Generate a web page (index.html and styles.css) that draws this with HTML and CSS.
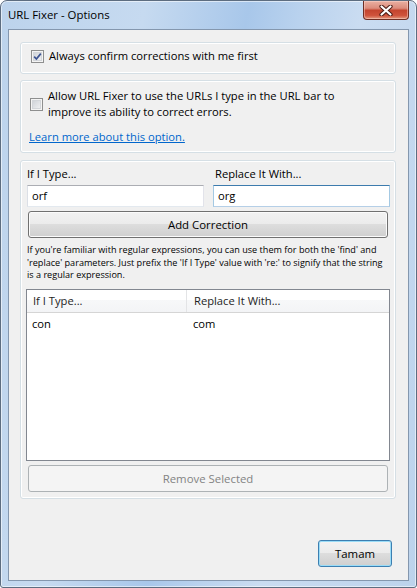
FILE: index.html
```html
<!DOCTYPE html>
<html>
<head>
<meta charset="utf-8">
<title>URL Fixer - Options</title>
<link rel="stylesheet" href="styles.css">
</head>
<body>
<div class="window">
  <div class="titlebar">
    <span class="title">URL Fixer - Options</span>
    <div class="close">
      <svg width="14" height="11" viewBox="0 0 14 11">
        <path d="M2.5 1.5 L11.5 9.5 M11.5 1.5 L2.5 9.5" stroke="#4a1b14" stroke-width="4.2" stroke-linecap="round" fill="none"/>
        <path d="M2.5 1.5 L11.5 9.5 M11.5 1.5 L2.5 9.5" stroke="#ffffff" stroke-width="2.2" stroke-linecap="round" fill="none"/>
      </svg>
    </div>
  </div>
  <div class="client">
    <div class="group g1">
      <div class="check-row">
        <span class="cb">
          <svg width="9" height="9" viewBox="0 0 9 9"><path d="M1.2 4.6 L3.4 7 L7.8 1.6" stroke="#3c5391" stroke-width="1.7" fill="none"/></svg>
        </span>
        <span class="cb-text">Always confirm corrections with me first</span>
      </div>
    </div>
    <div class="group g2">
      <div class="check-row multi">
        <span class="cb"></span>
        <span class="cb-text">Allow URL Fixer to use the URLs I type in the URL bar to<br>improve its ability to correct errors.</span>
      </div>
      <a class="link" href="#">Learn more about this option.</a>
    </div>
    <div class="group g3">
      <div class="fields">
        <div class="field">
          <div class="lbl">If I Type...</div>
          <div class="tb">orf</div>
        </div>
        <div class="field">
          <div class="lbl lbl2">Replace It With...</div>
          <div class="tb focus">org</div>
        </div>
      </div>
      <div class="btn add">Add Correction</div>
      <p class="hint">If you're familiar with regular expressions, you can use them for both the 'find' and 'replace' parameters. Just prefix the 'If I Type' value with 're:' to signify that the string is a regular expression.</p>
      <div class="list">
        <div class="lhead">
          <div class="hcol c1">If I Type...</div>
          <div class="hcol c2">Replace It With...</div>
        </div>
        <div class="lrow">
          <div class="cell c1">con</div>
          <div class="cell c2">com</div>
        </div>
      </div>
      <div class="btn disabled">Remove Selected</div>
    </div>
    <div class="footer">
      <div class="btn default">Tamam</div>
    </div>
  </div>
</div>
</body>
</html>
```
FILE: styles.css
```css
html, body {
  margin: 0;
  padding: 0;
  background: #ffffff;
}
body {
  font-family: "Open Sans", "Noto Sans", sans-serif;
  font-size: 11.2px;
  color: #000;
}
.window {
  box-sizing: border-box;
  width: 417px;
  height: 588px;
  border: 1px solid #5d6d80;
  border-radius: 7px 7px 3px 3px;
  padding: 0 7px 6px 7px;
  display: flex;
  flex-direction: column;
  background: linear-gradient(100deg, #bcd3ec 0%, #c6daf0 28%, #a8c7ea 48%, #b9d2ee 58%, #cadcf1 70%, #bcd3ec 100%);
  box-shadow: inset 0 0 0 1px rgba(255,255,255,0.55);
}
.titlebar {
  height: 28px;
  display: flex;
  align-items: flex-start;
}
.title {
  margin-top: 6px;
  font-size: 11.4px;
  line-height: 16px;
  color: #000;
}
.close {
  margin-left: auto;
  width: 44px;
  height: 18px;
  border: 1px solid #6e2e24;
  border-top: none;
  border-radius: 0 0 4px 4px;
  background: linear-gradient(#eab0a2 0%, #dc8c7c 40%, #c4452f 52%, #cf533c 80%, #e39a80 100%);
  box-shadow: inset 0 0 0 1px rgba(255,220,210,0.45);
  display: flex;
  align-items: center;
  justify-content: center;
}
.client {
  flex: 1;
  border: 1px solid #8497ae;
  background: #f0f0f0;
  padding: 12px 12px 0 11px;
  display: flex;
  flex-direction: column;
}
.group {
  border: 1px solid #d5dfe5;
  border-radius: 3px;
  box-shadow: inset 0 0 0 1px #ffffff;
}
.g1 {
  padding: 5px 8px 9px 10px;
}
.g2 {
  margin-top: 6px;
  padding: 7px 8px 7px 8px;
}
.g3 {
  margin-top: 7px;
  padding: 5px 5px 6px 6px;
}
.check-row {
  display: flex;
  align-items: center;
  line-height: 16px;
}
.check-row.multi {
  padding-left: 1px;
}
.cb {
  box-sizing: border-box;
  width: 13px;
  height: 13px;
  flex: none;
  border: 1px solid #8e8f8f;
  background: linear-gradient(135deg, #c9cdd3 0%, #e4e6e9 60%, #f5f5f6 100%);
  box-shadow: inset 0 0 0 1px #f4f4f4, inset 0 0 0 2px #d3d6da;
  display: flex;
  align-items: center;
  justify-content: center;
}
.cb-text {
  margin-left: 5px;
}
.link {
  display: block;
  margin-top: 9px;
  line-height: 16px;
  color: #0066cc;
  text-decoration: underline;
}
.fields {
  display: grid;
  grid-template-columns: 1fr 1fr;
  column-gap: 9px;
}
.lbl {
  line-height: 16px;
}
.lbl2 {
  padding-left: 2px;
}
.tb {
  box-sizing: border-box;
  margin-top: 3px;
  height: 22px;
  line-height: 20px;
  padding-left: 4px;
  background: #ffffff;
  border: 1px solid;
  border-color: #abadb3 #e2e3ea #e3e9ef #dbdfe6;
}
.tb.focus {
  border-color: #3d7bad #a4c9e3 #b5cfe7 #a4c9e3;
}
.btn {
  box-sizing: border-box;
  height: 27px;
  line-height: 25px;
  text-align: center;
  border: 1px solid #707070;
  border-radius: 3px;
  background: linear-gradient(#f2f2f2 0%, #ebebeb 50%, #dddddd 50%, #cfcfcf 100%);
  box-shadow: inset 0 0 0 1px #fbfbfb;
  font-size: 11.4px;
}
.add {
  margin: 4px 2px 0 1px;
}
.hint {
  margin: 6px 0 0 0;
  font-size: 9.1px;
  line-height: 12.5px;
}
.list {
  margin: 7.5px 0 0 -1px;
  box-sizing: border-box;
  height: 172px;
  border: 1px solid #828790;
  background: #ffffff;
}
.lhead {
  display: flex;
  height: 22px;
  border-bottom: 1px solid #d5d5d5;
  background: linear-gradient(#ffffff 0%, #ffffff 45%, #f7f8f9 45%, #f3f4f6 100%);
}
.hcol {
  line-height: 22px;
  color: #1e1e1e;
}
.hcol.c1 {
  width: 153px;
  padding-left: 6px;
  border-right: 1px solid #e3e4e6;
}
.hcol.c2 {
  padding-left: 7px;
}
.lrow {
  display: flex;
  height: 22px;
  line-height: 22px;
}
.cell.c1 {
  width: 156px;
  padding-left: 5px;
}
.cell.c2 {
  padding-left: 5px;
}
.btn.disabled {
  margin: 4px 2px 0 1px;
  border-color: #adb2b5;
  background: #f4f4f4;
  box-shadow: none;
  color: #838383;
}
.footer {
  margin-top: auto;
  padding: 0 4px 13px 0;
  display: flex;
  justify-content: flex-end;
}
.btn.default {
  width: 74px;
  border-color: #3c7fb1;
  box-shadow: inset 0 0 0 1px #9adcf7;
}
```
